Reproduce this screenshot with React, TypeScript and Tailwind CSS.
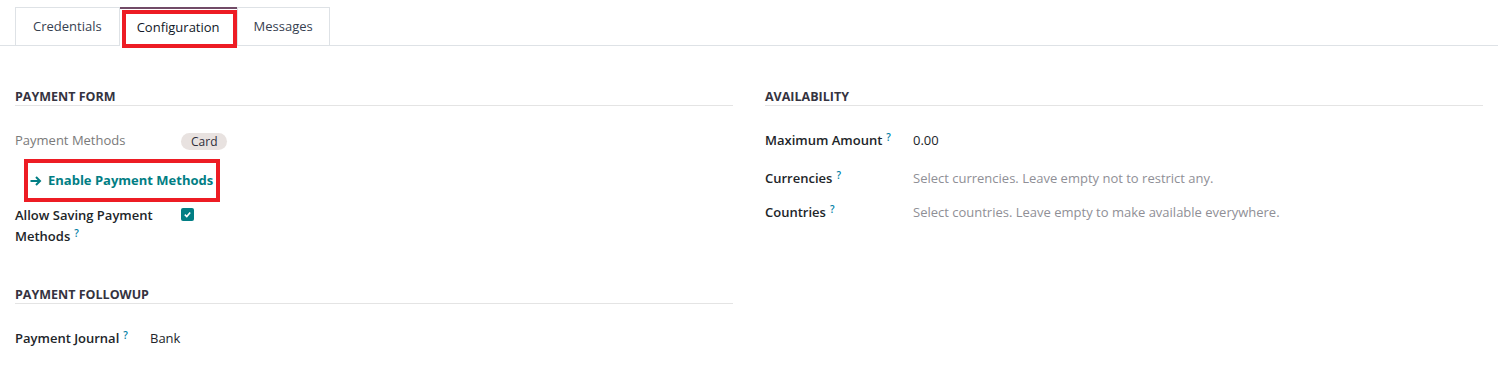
import React from "react";

const Q = () => (
  <sup className="ml-[4px] text-[10px] font-semibold text-[#0180a5] relative top-[-4px]">?</sup>
);

function Heading({ children }: { children: React.ReactNode }) {
  return (
    <div className="h-[20px] border-b border-[#e4e4e4] text-[12.5px] font-bold uppercase leading-[21px] text-[#35333f]">
      {children}
    </div>
  );
}

export default function App() {
  return (
    <div className="w-[1498px] h-[369px] bg-white text-[13px] text-[#212529]" style={{ fontFamily: '"Open Sans", "Noto Sans", sans-serif' }}>
      {/* Tabs */}
      <div className="pt-[7px] border-b border-[#dee2e6] pl-[15px] flex">
        <div className="h-[38px] px-[17px] flex items-center border border-b-0 border-[#dee2e6] text-[#374151]">Credentials</div>
        <div className="relative h-[39px] mb-[-1px] px-[17px] flex items-center border-t-2 border-t-[#714b67] bg-white text-[#111827]">
          Configuration
          <div className="absolute left-[2px] right-[0px] top-[1px] bottom-[-2px] border-4 border-[#ed1c24] pointer-events-none" />
        </div>
        <div className="h-[38px] px-[16px] flex items-center border border-b-0 border-[#dee2e6] text-[#374151]">Messages</div>
      </div>

      <div className="px-[15px] flex gap-[32px] pt-[40px]">
        {/* Left column */}
        <div className="w-[718px] flex flex-col">
          <Heading>Payment Form</Heading>
          <div className="mt-[23px] h-[24px] flex items-center">
            <div className="w-[166px] text-[#7a7a7a] font-medium">Payment Methods</div>
            <span className="h-[17px] px-[10px] rounded-full bg-[#e8e2e0] text-[12px] leading-[17px] text-[#2e2e3a]">Card</span>
          </div>
          <div className="mt-[16px] h-[24px] flex items-center pl-[15px] relative">
            <svg width="12" height="10" viewBox="0 0 12 10" className="mr-[6px]">
              <path d="M0.5 5 H10 M6 1 L10 5 L6 9" stroke="#017e84" strokeWidth="2" fill="none" />
            </svg>
            <span className="text-[#017e84] font-bold">Enable Payment Methods</span>
            <div className="absolute left-[9px] w-[196px] top-[-10px] h-[43px] border-4 border-[#ed1c24] pointer-events-none" />
          </div>
          <div className="mt-[12px] flex items-start">
            <div className="w-[166px] font-semibold leading-[21px]">
              Allow Saving Payment<br />Methods<Q />
            </div>
            <div className="mt-[3px] w-[13px] h-[13px] rounded-[2px] bg-[#017e84] flex items-center justify-center">
              <svg width="9" height="9" viewBox="0 0 10 10"><path d="M2 5.2 L4.2 7.2 L8 2.8" stroke="white" strokeWidth="1.8" fill="none" /></svg>
            </div>
          </div>
          <div className="mt-[37px]">
            <Heading>Payment Followup</Heading>
          </div>
          <div className="mt-[23px] h-[24px] flex items-center">
            <div className="w-[135px] font-semibold">Payment Journal<Q /></div>
            <span>Bank</span>
          </div>
        </div>

        {/* Right column */}
        <div className="w-[718px] flex flex-col">
          <Heading>Availability</Heading>
          <div className="mt-[23px] h-[24px] flex items-center">
            <div className="w-[148px] font-semibold">Maximum Amount<Q /></div>
            <span>0.00</span>
          </div>
          <div className="mt-[14px] h-[24px] flex items-center">
            <div className="w-[148px] font-semibold">Currencies<Q /></div>
            <span className="text-[#8f8f96]">Select currencies. Leave empty not to restrict any.</span>
          </div>
          <div className="mt-[10px] h-[24px] flex items-center">
            <div className="w-[148px] font-semibold">Countries<Q /></div>
            <span className="text-[#8f8f96]">Select countries. Leave empty to make available everywhere.</span>
          </div>
        </div>
      </div>
    </div>
  );
}
